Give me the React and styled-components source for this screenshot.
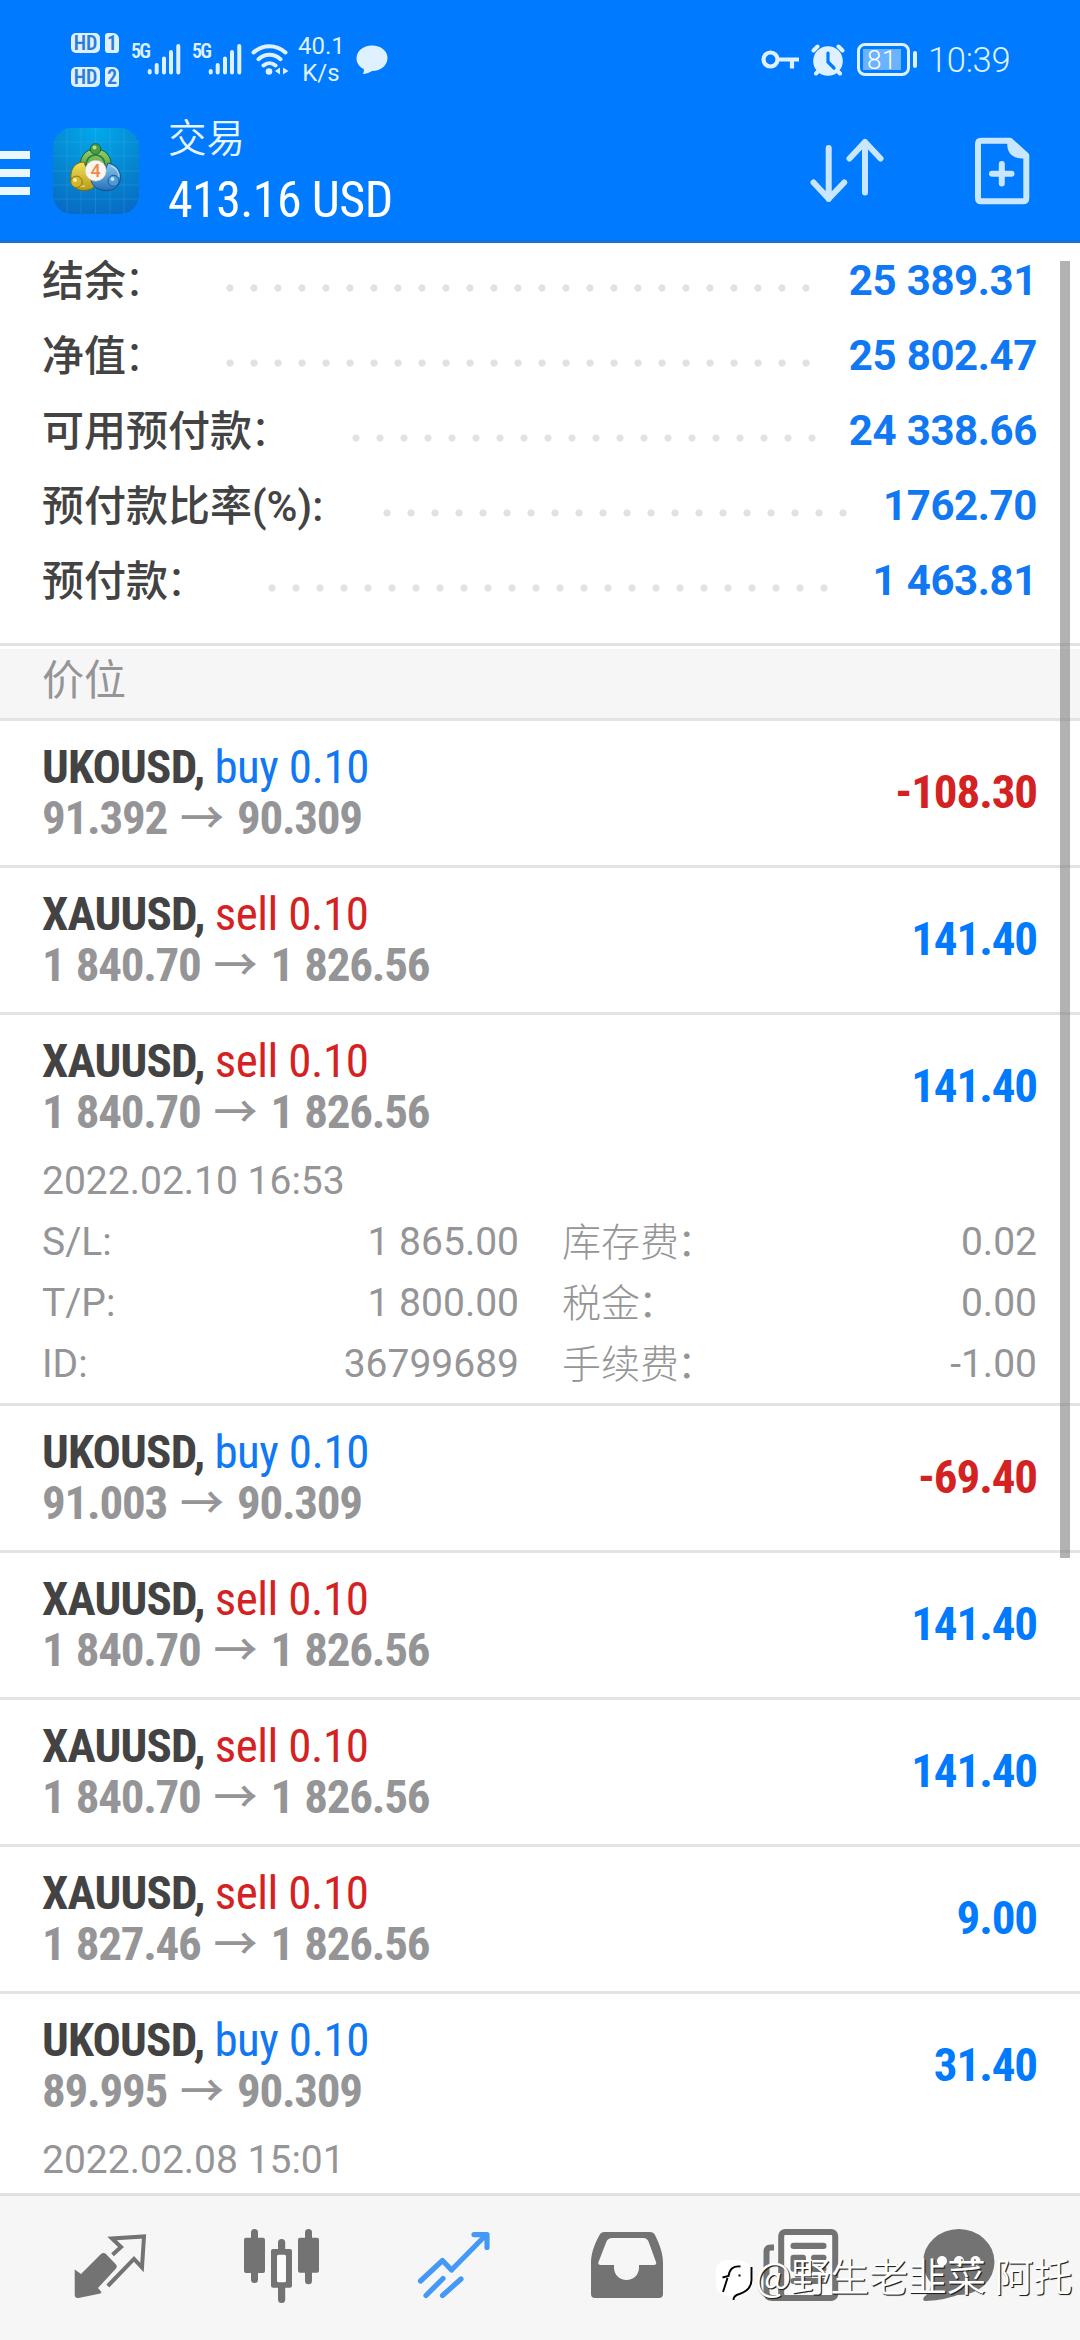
import styled, { createGlobalStyle } from 'styled-components'

const colors = {
  primary: '#007aff',
  buy: '#0f78f2',
  sell: '#d42222',
  text: '#434343',
  muted: '#959597',
  line: '#e3e3e3',
  panel: '#f6f6f6',
  icon: '#737373',
  status: '#dff1ff',
}

const regular = `Roboto, 'Noto Sans CJK SC', sans-serif`
const condensed = `'Roboto Condensed', Roboto, 'Noto Sans CJK SC', sans-serif`

const GlobalStyle = createGlobalStyle`
  body {
    margin: 0;
    background: #fff;
    font-family: ${regular};
  }
  svg {
    display: block;
    flex: none;
  }
`

const Page = styled.div`
  position: relative;
  display: flex;
  flex-direction: column;
  width: 1080px;
  height: 2340px;
  overflow: hidden;
  background: #fff;
`

/* status bar */

const StatusBar = styled.div`
  display: flex;
  align-items: center;
  box-sizing: border-box;
  height: 119px;
  padding: 0 71px;
  background: ${colors.primary};
  color: ${colors.status};
`

const SimGrid = styled.div`
  display: grid;
  grid-template-columns: 29px 14px;
  gap: 14px 5px;
`

const Badge = styled.span`
  height: 20px;
  border-radius: ${(props) => (props.$sim ? '3px 6px 3px 3px' : '5px')};
  background: ${colors.status};
  color: #2a7ddc;
  font: 600 20px/20px ${condensed};
  text-align: center;
`

const Network = styled.div`
  display: flex;
  margin-left: ${(props) => props.$gap}px;
`

const NetworkType = styled.span`
  width: 16px;
  font: 600 20px/14px ${condensed};
  letter-spacing: -1.8px;
`

const Wifi = styled.svg`
  margin-left: 8px;
`

const Speed = styled.div`
  width: 46px;
  margin-left: 8px;
  font-size: 24px;
  line-height: 27px;
  text-align: center;
`

const Bubble = styled.svg`
  margin-left: 12px;
`

const StatusRight = styled.div`
  display: flex;
  align-items: center;
  margin-left: auto;
`

const AlarmIcon = styled.svg`
  margin-left: 11px;
`

const Battery = styled.div`
  display: flex;
  align-items: center;
  box-sizing: border-box;
  width: 53px;
  height: 33px;
  margin-left: 12px;
  padding: 0 3px;
  border: 3px solid ${colors.status};
  border-radius: 8px;
`

const BatteryLevel = styled.div`
  width: 38px;
  height: 21px;
  background: rgba(255, 255, 255, 0.42);
  color: #fff;
  font: 300 26px/22px ${regular};
  letter-spacing: 0.6px;
  text-align: center;
`

const BatteryTip = styled.div`
  width: 4px;
  height: 17px;
  margin-left: 3px;
  border-radius: 2px;
  background: ${colors.status};
`

const Clock = styled.span`
  width: 81px;
  margin-left: 11px;
  font: 300 34.5px/40px ${regular};
  letter-spacing: -0.3px;
  white-space: nowrap;
`

/* app header */

const Header = styled.header`
  display: flex;
  align-items: flex-start;
  box-sizing: border-box;
  height: 124px;
  padding-right: 48px;
  border-bottom: 3px solid #1672d6;
  background: ${colors.primary};
  color: #fff;
`

const MenuButton = styled.div`
  display: flex;
  flex-direction: column;
  gap: 10px;
  width: 30px;
  margin-top: 32px;
`

const MenuLine = styled.span`
  height: 8px;
  background: #ebf7ff;
`

const Logo = styled.svg`
  margin: 9px 0 0 23px;
`

const Titles = styled.div`
  margin: -5px 0 0 29px;
`

const Title = styled.div`
  color: #e6f5ff;
  font-size: 38.5px;
  font-weight: 350;
  line-height: 50px;
`

const Total = styled.div`
  margin-top: 6px;
  font: 450 50px/60px ${condensed};
  letter-spacing: -0.6px;
`

const SortIcon = styled.svg`
  margin: 17px 85px 0 auto;
`

const NewOrderIcon = styled.svg`
  margin-top: 15px;
`

/* account summary */

const Summary = styled.div`
  padding: 0 43px 25px 42px;
`

const SummaryRow = styled.div`
  display: flex;
  height: 75px;
  font-size: 42px;
  line-height: 75px;
`

const SummaryLabel = styled.span`
  padding-top: 1px;
  color: ${colors.text};
  font-weight: 500;
`

const Colon = styled.span`
  margin: ${(props) => (props.$wide ? '0 2px 0 -2px' : '0 2px 0 0')};
  font-weight: ${(props) => (props.$wide ? 350 : 500)};
`

const Leader = styled.span`
  flex: 1;
  margin: 33px 30px 0 50px;
  height: 24px;
  background: radial-gradient(circle at 12px 12px, #e2e2e2 3.2px, transparent 4px) 0 0 / 24px 24px repeat-x;
`

const SummaryValue = styled.span`
  color: ${colors.buy};
  font-weight: 700;
  letter-spacing: -0.4px;
  word-spacing: 0.5px;
`

const SectionTitle = styled.div`
  box-sizing: border-box;
  height: 78px;
  padding-left: 42px;
  border-top: 3px solid ${colors.line};
  border-bottom: 3px solid ${colors.line};
  background: linear-gradient(#fff 3px, ${colors.panel} 3px);
  color: ${colors.muted};
  font-size: 42px;
  line-height: 70px;
`

/* positions */

const Content = styled.main`
  flex: 1;
  min-height: 0;
  overflow: hidden;
`

const Position = styled.div`
  padding: 0 43px 8px 42px;
  border-bottom: 3px solid ${colors.line};
`

const PositionHead = styled.div`
  display: flex;
  justify-content: space-between;
  align-items: center;
  height: 136px;
  font: 700 47px/51px ${condensed};
`

const Deal = styled.div`
  padding-top: 6px;
`

const Symbol = styled.div`
  color: ${colors.text};
  letter-spacing: -0.8px;
  white-space: pre;
`

const Side = styled.span`
  color: ${(props) => (props.$side === 'buy' ? colors.buy : colors.sell)};
  font-weight: 400;
  letter-spacing: -0.45px;
`

const Prices = styled.div`
  display: flex;
  gap: 13px;
  color: ${colors.muted};
  letter-spacing: -1.25px;
  word-spacing: 1.6px;
`

const Arrow = styled.span`
  font: 500 44px/55px ${condensed};
  height: 51px;
  letter-spacing: 0;
`

const Profit = styled.div`
  padding-top: 5px;
  color: ${(props) => (props.$loss ? colors.sell : colors.primary)};
  letter-spacing: -1.1px;
`

const Details = styled.div`
  color: ${colors.muted};
  font-size: 39px;
  line-height: 61px;
`

const DetailGrid = styled.div`
  display: grid;
  grid-template-columns: 477px 1fr;
  column-gap: 43px;
`

const DetailItem = styled.div`
  display: flex;
  justify-content: space-between;
  height: 61px;
`

const DetailLabel = styled.span`
  padding-top: ${(props) => (props.$light ? 1 : 0)}px;
  font-weight: ${(props) => (props.$light ? 300 : 400)};
`

const Scrollbar = styled.div`
  position: absolute;
  top: 261px;
  right: 10px;
  width: 10px;
  height: 1297px;
  background: rgba(127, 127, 127, 0.6);
`

/* tabs */

const TabBar = styled.nav`
  display: grid;
  grid-template-columns: repeat(3, 172px) repeat(2, 173px) 145px;
  justify-items: center;
  box-sizing: border-box;
  height: 147px;
  padding: 24px 0 0 24px;
  border-top: 3px solid #e0e0e0;
  background: ${colors.panel};
`

const Watermark = styled.div`
  position: absolute;
  left: 712px;
  top: 2249px;
  display: flex;
  color: #fff;
  font: 350 38.9px/50px 'Noto Sans CJK SC', sans-serif;
  text-shadow: 1px 1px 0 #222, 1px 1px 1px rgba(0, 0, 0, 0.6);
  white-space: nowrap;
`

const WatermarkName = styled.span`
  margin-left: -2px;
`

const summary = [
  { label: '结余', value: '25 389.31' },
  { label: '净值', value: '25 802.47' },
  { label: '可用预付款', value: '24 338.66' },
  { label: '预付款比率(%)', colon: ':', value: '1762.70' },
  { label: '预付款', value: '1 463.81' },
]

const positions = [
  { symbol: 'UKOUSD', side: 'buy', open: '91.392', current: '90.309', profit: '-108.30' },
  { symbol: 'XAUUSD', side: 'sell', open: '1 840.70', current: '1 826.56', profit: '141.40' },
  {
    symbol: 'XAUUSD',
    side: 'sell',
    open: '1 840.70',
    current: '1 826.56',
    profit: '141.40',
    time: '2022.02.10 16:53',
    details: [
      ['S/L', '1 865.00'],
      ['库存费', '0.02'],
      ['T/P', '1 800.00'],
      ['税金', '0.00'],
      ['ID', '36799689'],
      ['手续费', '-1.00'],
    ],
  },
  { symbol: 'UKOUSD', side: 'buy', open: '91.003', current: '90.309', profit: '-69.40' },
  { symbol: 'XAUUSD', side: 'sell', open: '1 840.70', current: '1 826.56', profit: '141.40' },
  { symbol: 'XAUUSD', side: 'sell', open: '1 840.70', current: '1 826.56', profit: '141.40' },
  { symbol: 'XAUUSD', side: 'sell', open: '1 827.46', current: '1 826.56', profit: '9.00' },
  {
    symbol: 'UKOUSD',
    side: 'buy',
    open: '89.995',
    current: '90.309',
    profit: '31.40',
    time: '2022.02.08 15:01',
  },
]

function Signal({ gap }) {
  return (
    <Network $gap={gap}>
      <NetworkType>5G</NetworkType>
      <svg width="34" height="31" stroke={colors.status} strokeWidth="4" strokeLinecap="round">
        <path d="M2.7 27v1.5M9.7 21v7.5M17 14.5v14M24 8v20.5M31.3 2v26.5" />
      </svg>
    </Network>
  )
}

function PhoneStatus() {
  return (
    <StatusBar>
      <SimGrid>
        <Badge>HD</Badge>
        <Badge $sim>1</Badge>
        <Badge>HD</Badge>
        <Badge $sim>2</Badge>
      </SimGrid>
      <Signal gap={12} />
      <Signal gap={11} />
      <Wifi width="40" height="33" fill="none" stroke={colors.status} strokeWidth="4" strokeLinecap="round">
        <path d="M3.5 9.5C13 1 26 1 35.5 9.5M8.5 16.2C15 10.3 24 10.3 30.5 16.2M13.5 22.5C17 19.5 22 19.5 25.5 22.5" />
        <circle cx="19" cy="28.5" r="3.3" fill={colors.status} stroke="none" />
        <path d="M30 24.5v7l-5-3.5zM33 24.5v7l5.5-3.5z" fill={colors.status} stroke="none" />
      </Wifi>
      <Speed>
        40.1
        <br />
        K/s
      </Speed>
      <Bubble width="32" height="30" viewBox="0 0 32 30">
        <path
          d="M16 .5C25 .5 31.5 6 31.5 13S25 26 16 26c-2 1.5-5.5 3-9.5 3 1.3-1.3 1.7-3 1.3-5C3.500 22 .5 18 .5 13.500.5 6 7 .5 16 .5z"
          fill={colors.status}
        />
      </Bubble>
      <StatusRight>
        <svg width="39" height="20" fill="none" stroke={colors.status} strokeWidth="4.2">
          <circle cx="9.5" cy="9.5" r="7" />
          <path d="M16.5 9.5H38M31 9.5v9" />
        </svg>
        <AlarmIcon width="34" height="32" viewBox="0 0 34 32" stroke={colors.status}>
          <circle cx="17" cy="17" r="14.8" fill={colors.status} stroke="none" />
          <path d="M2.5 6.5l4-4M31.5 6.5l-4-4" strokeWidth="4" strokeLinecap="round" />
          <path d="M5 29.5l3-3M29 29.5l-3-3" strokeWidth="4" strokeLinecap="round" />
          <path d="M17 9v9l6 6" fill="none" stroke={colors.primary} strokeWidth="3.2" strokeLinecap="round" />
        </AlarmIcon>
        <Battery>
          <BatteryLevel>81</BatteryLevel>
        </Battery>
        <BatteryTip />
        <Clock>10:39</Clock>
      </StatusRight>
    </StatusBar>
  )
}

function AppLogo() {
  return (
    <Logo width="86" height="86" viewBox="0 0 86 86">
      <defs>
        <radialGradient id="sky" cx="0.5" cy="0" r="1.1">
          <stop offset="0" stopColor="#02a9ec" />
          <stop offset="0.55" stopColor="#0586cf" />
          <stop offset="1" stopColor="#0867c4" />
        </radialGradient>
        <linearGradient id="green" x1="0" y1="0" x2="0" y2="1">
          <stop offset="0" stopColor="#9bd06a" />
          <stop offset="1" stopColor="#2f8f3c" />
        </linearGradient>
        <linearGradient id="yellow" x1="0" y1="0" x2="0" y2="1">
          <stop offset="0" stopColor="#f3e25a" />
          <stop offset="1" stopColor="#b99a16" />
        </linearGradient>
        <linearGradient id="blue" x1="0" y1="0" x2="0" y2="1">
          <stop offset="0" stopColor="#8cc9f2" />
          <stop offset="1" stopColor="#2470b8" />
        </linearGradient>
      </defs>
      <rect width="86" height="86" rx="19" fill="url(#sky)" />
      <path
        d="M14 0v86M28 0v86M42.5 0v86M57 0v86M71 0v86M0 14h86M0 28h86M0 43h86M0 57h86M0 71h86"
        stroke="#7fd0f5"
        strokeOpacity="0.2"
        strokeWidth="0.8"
      />
      <path d="M28 42c-3-12 4-21 14.500-21S61 30 57 43l-7 6-14-2z" fill="url(#green)" stroke="#14622f" />
      <path d="M31 34c-9 0-14 7-13 17 1 8 7 13 17 11 6-1 8-5 7-10L34 42z" fill="url(#yellow)" stroke="#7a6a14" />
      <path d="M55 35c9 2 14 9 12 18-2 8-10 11-18 9-6-1-10-5-11-10l12-4z" fill="url(#blue)" stroke="#134f8c" />
      <path d="M33 38c0-7 4-11 9.500-11S52 31 52 38" fill="none" stroke="#1f6d33" strokeOpacity="0.8" strokeWidth="1.5" />
      <path d="M32 58c-5 1-9-1-10-5M66 49c0-6-4-10-8-11" fill="none" stroke="#fff" strokeOpacity="0.45" strokeWidth="1.4" />
      <circle cx="42.5" cy="21" r="5.3" fill="#4c9e45" stroke="#1b6a31" />
      <circle cx="41.5" cy="19.5" r="2" fill="#b5dd90" />
      <circle cx="23.5" cy="53.8" r="5.7" fill="#d5b62b" stroke="#8a7415" />
      <circle cx="22" cy="52" r="2" fill="#f8efa0" />
      <circle cx="60.5" cy="52.8" r="5.5" fill="#4c9bd8" stroke="#1a5c9c" />
      <circle cx="59.5" cy="51" r="2" fill="#c4e6fb" />
      <circle cx="42.7" cy="42.7" r="10.5" fill="#fbf6f2" stroke="#c9c4bd" strokeWidth="0.6" />
      <text x="42.7" y="49" textAnchor="middle" fontSize="18" fontWeight="500" fill="#f08a45">
        4
      </text>
    </Logo>
  )
}

function TopBar() {
  return (
    <Header>
      <MenuButton>
        <MenuLine />
        <MenuLine />
        <MenuLine />
      </MenuButton>
      <AppLogo />
      <Titles>
        <Title>交易</Title>
        <Total>413.16 USD</Total>
      </Titles>
      <SortIcon
        width="80"
        height="70"
        fill="none"
        stroke="#c8e7ff"
        strokeWidth="6"
        strokeLinecap="round"
        strokeLinejoin="round"
      >
        <path d="M21.7 12v51M6.5 46.5l15.2 16.3 15.5-16.3" />
        <path d="M58 56.5V6M42.5 22.5L58 6l15.5 16.5" />
      </SortIcon>
      <NewOrderIcon width="60" height="74" fill="none" stroke="#c8e7ff" strokeWidth="6">
        <path d="M9 6.7H38L54.3 21.5V64q0 3.3-3.3 3.3H9q-3 0-3-3.3V10q0-3.3 3-3.3z" strokeLinejoin="round" />
        <path d="M35.3 6c-1 13 4 19 19 18.500V20L40 5z" fill="#c8e7ff" stroke="none" />
        <path d="M20 39.7h19.5M29.800 30v19.500" strokeLinecap="round" />
      </NewOrderIcon>
    </Header>
  )
}

function PositionRow({ position }) {
  const { symbol, side, open, current, profit, time, details } = position
  return (
    <Position>
      <PositionHead>
        <Deal>
          <Symbol>
            {symbol}, <Side $side={side}>{side} 0.10</Side>
          </Symbol>
          <Prices>
            <span>{open}</span>
            <Arrow>→</Arrow>
            <span>{current}</span>
          </Prices>
        </Deal>
        <Profit $loss={profit.startsWith('-')}>{profit}</Profit>
      </PositionHead>
      {time && (
        <Details>
          {time}
          {details && (
            <DetailGrid>
              {details.map(([label, value], index) => {
                const wide = index % 2 === 1
                return (
                  <DetailItem key={label}>
                    <DetailLabel $light={wide}>
                      {label}
                      {wide ? <Colon $wide>：</Colon> : ':'}
                    </DetailLabel>
                    <span>{value}</span>
                  </DetailItem>
                )
              })}
            </DetailGrid>
          )}
        </Details>
      )}
    </Position>
  )
}

function TabIcon({ children }) {
  return (
    <svg width="100" height="90" viewBox="0 0 100 90" fill={colors.icon}>
      {children}
    </svg>
  )
}

function Tabs() {
  return (
    <TabBar>
      <TabIcon>
        <path d="M14.7 49.5L21 54l20-20q2.5-2 5 0l10 10.5q1.5 2 0 4L38 68l3.5 4-1 1.5-22 4.5q-3.8.3-3.8-3.5z" />
        <path
          d="M52.5 34.7l8.5-7.7-9-8.5L84 16.5 82 47.5l-8-8.7L47.8 66"
          fill="none"
          stroke={colors.icon}
          strokeWidth="4"
        />
      </TabIcon>
      <TabIcon>
        <rect x="12" y="17.7" width="21" height="35.3" rx="2" />
        <rect x="19" y="9" width="7" height="54" rx="3.5" />
        <rect x="46" y="19" width="7.2" height="64" rx="3.5" />
        <rect x="39" y="29" width="21" height="38.7" rx="2" />
        <rect x="45" y="34.7" width="9" height="27.5" rx="1.5" fill="#fbfbfb" />
        <rect x="66" y="17.7" width="21" height="35" rx="2" />
        <rect x="73" y="9" width="7" height="55.3" rx="3.5" />
      </TabIcon>
      <TabIcon>
        <g fill="none" stroke="#4499f6" strokeWidth="5.2" strokeLinecap="round" strokeLinejoin="round">
          <path d="M16.5 61L38.5 40.5l9 9.5L82 15" />
          <path d="M70 14.6h13v12.9" />
          <path d="M22 75.5L39 58.5M38.5 75.5L57 59" />
        </g>
      </TabIcon>
      <TabIcon>
        <path
          fillRule="evenodd"
          d="M27.5 12H73q3.5 0 5 3C83 25 86 34 86 43V74q0 4-4 4H18q-4 0-4-4V43C14 34 17 25 22.5 15q1.5-3 5-3zM35 18q-4 0-5.5 3.5L21.5 42q-1 3 2 3H37v2.5C37 55 42.5 60 49.5 60S62 55 62 47.5V45H77q3 0 2-3L71.5 21.5Q70 18 66.5 18z"
        />
      </TabIcon>
      <TabIcon>
        <path
          d="M24 27.5H20.5q-4 0-4 4.5V72q0 6 6 6H40"
          fill="none"
          stroke={colors.icon}
          strokeWidth="6"
        />
        <rect x="31.2" y="12" width="54" height="66" rx="4" fill="#fbfbfb" stroke={colors.icon} strokeWidth="6" />
        <rect x="40.5" y="22.8" width="36" height="6.2" rx="3" />
        <rect x="40.5" y="34.7" width="15.5" height="17" rx="3" />
        <rect x="61" y="34.7" width="15.5" height="6" rx="3" />
        <rect x="61" y="46" width="15.5" height="6" rx="3" />
        <rect x="40.5" y="58" width="36" height="6" rx="3" />
      </TabIcon>
      <TabIcon>
        <ellipse cx="49.8" cy="42" rx="35.7" ry="33" />
        <path d="M22 60q1 11-7 17-2 4 1.5 4Q38 80 54 73z" />
        <g fill="#fff">
          <circle cx="33" cy="41" r="5" />
          <circle cx="50" cy="41" r="5" />
          <circle cx="66.5" cy="41" r="5" />
        </g>
      </TabIcon>
    </TabBar>
  )
}

function App() {
  return (
    <Page>
      <GlobalStyle />
      <PhoneStatus />
      <TopBar />
      <Content>
        <Summary>
          {summary.map(({ label, colon, value }) => (
            <SummaryRow key={label}>
              <SummaryLabel>
                {label}
                <Colon $wide={!colon}>{colon || '：'}</Colon>
              </SummaryLabel>
              <Leader />
              <SummaryValue>{value}</SummaryValue>
            </SummaryRow>
          ))}
        </Summary>
        <SectionTitle>价位</SectionTitle>
        {positions.map((position, index) => (
          <PositionRow key={index} position={position} />
        ))}
      </Content>
      <Scrollbar />
      <Tabs />
      <Watermark>
        <svg width="45" height="56" viewBox="0 0 45 56">
          <path
            d="M4 25C4 12 10 11 21 11s19 3 19 13v11c0 7-6 10-12 12l-7 6V47C8 47 4 42 4 35z"
            fill="#fff"
          />
          <path
            d="M39.5 18v13c0 8-6 12-12 14-4 1-6 3-6 6M10.5 28.5l6-1.5c1-7 5-10.5 12-9.5M15.5 29l-4.5 14M26.5 26.5h2"
            fill="none"
            stroke="#000"
            strokeWidth="1.9"
          />
        </svg>
        <WatermarkName>@野生老韭菜 阿托</WatermarkName>
      </Watermark>
    </Page>
  )
}

export default App
